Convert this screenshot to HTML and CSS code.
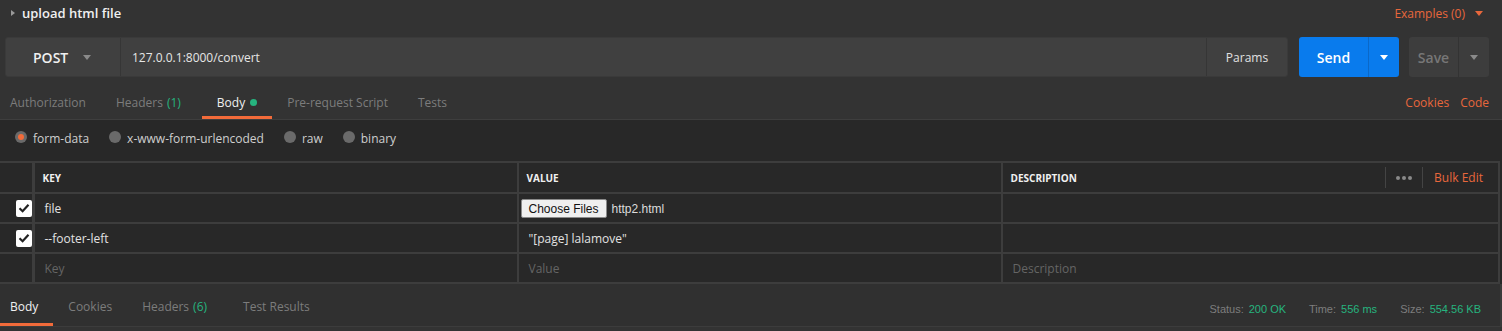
FILE: index.html
```
<!DOCTYPE html>
<html lang="en">
<head>
    <meta charset="UTF-8">
    <meta name="viewport" content="width=device-width, initial-scale=1.0">
    <title>upload html file</title>
    <link rel="stylesheet" href="styles.css">
</head>
<body>
    <div class="title-bar">
        <div class="title">
            <span class="toggle"></span>
            <span>upload html file</span>
        </div>
        <div class="examples">Examples (0) <span class="caret orange"></span></div>
    </div>

    <div class="url-row">
        <div class="url-box">
            <div class="method">POST <span class="caret"></span></div>
            <div class="url">127.0.0.1:8000/convert</div>
            <div class="params">Params</div>
        </div>
        <div class="send">
            <span class="send-label">Send</span>
            <span class="send-drop"><span class="caret white"></span></span>
        </div>
        <div class="save">
            <span class="save-label">Save</span>
            <span class="save-drop"><span class="caret"></span></span>
        </div>
    </div>

    <div class="req-tabs">
        <div class="tabs">
            <div class="tab">Authorization</div>
            <div class="tab">Headers <span class="count">(1)</span></div>
            <div class="tab active">Body <span class="dot"></span></div>
            <div class="tab">Pre-request Script</div>
            <div class="tab">Tests</div>
        </div>
        <div class="links">
            <span>Cookies</span>
            <span>Code</span>
        </div>
    </div>

    <div class="body-panel">
        <div class="body-types">
            <label class="radio"><span class="circle on"></span>form-data</label>
            <label class="radio"><span class="circle"></span>x-www-form-urlencoded</label>
            <label class="radio"><span class="circle"></span>raw</label>
            <label class="radio"><span class="circle"></span>binary</label>
        </div>

        <table class="kv">
            <thead>
                <tr>
                    <th class="check-col"></th>
                    <th class="key-col">KEY</th>
                    <th class="value-col">VALUE</th>
                    <th class="desc-col">
                        <div class="desc-head">
                            <span>DESCRIPTION</span>
                            <div class="desc-tools">
                                <span class="more"><i></i><i></i><i></i></span>
                                <span class="bulk">Bulk Edit</span>
                            </div>
                        </div>
                    </th>
                </tr>
            </thead>
            <tbody>
                <tr>
                    <td class="check-col"><span class="checkbox">
                        <svg width="12" height="10" viewBox="0 0 12 10"><path d="M1.5 5.2 L4.6 8.2 L10.5 1.8" fill="none" stroke="#222" stroke-width="2.2"/></svg>
                    </span></td>
                    <td>file</td>
                    <td class="file-cell"><button class="file-btn">Choose Files</button><span class="file-name">http2.html</span></td>
                    <td></td>
                </tr>
                <tr>
                    <td class="check-col"><span class="checkbox">
                        <svg width="12" height="10" viewBox="0 0 12 10"><path d="M1.5 5.2 L4.6 8.2 L10.5 1.8" fill="none" stroke="#222" stroke-width="2.2"/></svg>
                    </span></td>
                    <td>--footer-left</td>
                    <td>"[page] lalamove"</td>
                    <td></td>
                </tr>
                <tr class="placeholder">
                    <td class="check-col"></td>
                    <td>Key</td>
                    <td>Value</td>
                    <td>Description</td>
                </tr>
            </tbody>
        </table>
    </div>

    <div class="resp-bar">
        <div class="tabs">
            <div class="tab active">Body</div>
            <div class="tab">Cookies</div>
            <div class="tab">Headers <span class="count">(6)</span></div>
            <div class="tab">Test Results</div>
        </div>
        <div class="meta">
            <span class="meta-label">Status:</span><span class="meta-val">200 OK</span>
            <span class="meta-label">Time:</span><span class="meta-val">556 ms</span>
            <span class="meta-label">Size:</span><span class="meta-val">554.56 KB</span>
        </div>
    </div>
</body>
</html>
```

FILE: styles.css
```
body {
    margin: 0;
    background: #333333;
    font-family: "Open Sans", "Noto Sans", sans-serif;
    font-size: 12px;
    color: #d0d0d0;
}

/* 顶部标题 */
.title-bar {
    height: 37px;
    display: flex;
    justify-content: space-between;
    align-items: flex-start;
    padding: 0 19px 0 10px;
}
.title {
    display: flex;
    align-items: center;
    height: 25px;
    font-size: 13px;
    font-weight: 600;
    color: #f0f0f0;
}
.toggle {
    width: 0;
    height: 0;
    border-top: 3.5px solid transparent;
    border-bottom: 3.5px solid transparent;
    border-left: 4px solid #9a9a9a;
    margin: 0 7px 0 1px;
}
.examples {
    height: 26px;
    display: flex;
    align-items: center;
    color: #e8673c;
}
.caret {
    display: inline-block;
    width: 0;
    height: 0;
    border-left: 4px solid transparent;
    border-right: 4px solid transparent;
    border-top: 5px solid #8a8a8a;
}
.caret.orange {
    border-top-color: #e8673c;
    margin-left: 10px;
}
.caret.white {
    border-top-color: #ffffff;
}

/* 地址栏 */
.url-row {
    display: flex;
    height: 40px;
    padding: 0 13px 0 5px;
}
.url-box {
    flex: 1;
    display: flex;
    background: #404040;
    border: 1px solid #3a3a3a;
    border-radius: 3px;
}
.method {
    width: 115px;
    display: flex;
    align-items: center;
    padding-left: 27px;
    box-sizing: border-box;
    font-size: 14px;
    font-weight: 600;
    color: #f0f0f0;
    border-right: 1px solid #363636;
}
.method .caret {
    margin-left: 15px;
}
.url {
    flex: 1;
    display: flex;
    align-items: center;
    padding-left: 11px;
    color: #e6e6e6;
}
.params {
    width: 80px;
    display: flex;
    align-items: center;
    justify-content: center;
    border-left: 1px solid #363636;
    color: #e0e0e0;
}
.send {
    width: 100px;
    margin-left: 11px;
    display: flex;
    background: #097bed;
    border-radius: 3px;
    color: #fff;
    font-size: 14px;
    font-weight: 600;
}
.send-label {
    width: 69px;
    display: flex;
    align-items: center;
    justify-content: center;
}
.send-drop {
    flex: 1;
    display: flex;
    align-items: center;
    justify-content: center;
    border-left: 1px solid #0a68c8;
}
.save {
    width: 80px;
    margin-left: 10px;
    display: flex;
    background: #3d3d3d;
    border-radius: 3px;
    color: #777;
    font-size: 14px;
    font-weight: 600;
}
.save-label {
    width: 49px;
    display: flex;
    align-items: center;
    justify-content: center;
}
.save-drop {
    flex: 1;
    display: flex;
    align-items: center;
    justify-content: center;
    border-left: 1px solid #333;
}

/* 请求标签 */
.req-tabs {
    height: 42px;
    display: flex;
    justify-content: space-between;
    align-items: flex-end;
    border-bottom: 1px solid #3e3e3e;
}
.tabs {
    display: flex;
}
.tab {
    height: 27px;
    line-height: 25px;
    padding: 0 15px;
    color: #7c7c7c;
    border-bottom: 3px solid transparent;
    display: flex;
    align-items: center;
}
.tab:first-child {
    padding-left: 10px;
}
.tab .count {
    color: #26b47f;
    margin: 0 6px 0 4px;
}
.tab.active {
    color: #f0f0f0;
    border-bottom-color: #f26b3a;
}
.dot {
    width: 7px;
    height: 7px;
    border-radius: 50%;
    background: #26b47f;
    margin-left: 5px;
}
.links {
    height: 34px;
    display: flex;
    align-items: center;
    color: #e8673c;
    padding-right: 13px;
}
.links span + span {
    margin-left: 11px;
}

/* 请求体 */
.body-panel {
    background: #282828;
}
.body-types {
    height: 41px;
    box-sizing: border-box;
    padding: 0 0 4px 15px;
    display: flex;
    align-items: center;
}
.radio {
    display: flex;
    align-items: center;
    margin-right: 20px;
    color: #cfcfcf;
}
.circle {
    width: 12px;
    height: 12px;
    border-radius: 50%;
    background: #6a6a6a;
    margin-right: 6px;
    margin-top: -3px;
    display: flex;
    align-items: center;
    justify-content: center;
}
.circle.on::after {
    content: '';
    width: 6px;
    height: 6px;
    border-radius: 50%;
    background: #f26b3a;
}

/* 参数表格 */
.kv {
    width: 1500px;
    border-collapse: collapse;
    table-layout: fixed;
}
.kv th, .kv td {
    border: 2px solid #3d3d3d;
    height: 28px;
    padding: 0 0 0 10px;
    text-align: left;
    color: #e2e2e2;
    white-space: nowrap;
}
.kv td {
    height: 27px;
    padding-top: 1px;
}
.kv th {
    height: 29px;
    padding: 0 0 0 8px;
    font-size: 10px;
    font-weight: 700;
    color: #f0f0f0;
}
.kv .check-col {
    width: 33px;
    border-left: none;
    border-right-width: 3px;
    padding: 0 0 0 16px;
    box-sizing: border-box;
}
.kv th:nth-child(2), .kv td:nth-child(2) {
    width: 474px;
}
.kv th:nth-child(3), .kv td:nth-child(3) {
    width: 474px;
}
.desc-head {
    display: flex;
    justify-content: space-between;
    align-items: center;
}
.desc-tools {
    display: flex;
    align-items: center;
    height: 21px;
}
.more {
    height: 21px;
    border-left: 1px solid #444;
    border-right: 1px solid #444;
    padding: 0 10px;
    display: flex;
    align-items: center;
    gap: 2px;
}
.more i {
    width: 4px;
    height: 4px;
    border-radius: 50%;
    background: #8a8a8a;
}
.bulk {
    margin: 0 15px 0 11px;
    font-size: 12px;
    font-weight: 400;
    color: #e8673c;
}
.checkbox {
    width: 16px;
    height: 17px;
    background: #fff;
    border-radius: 2px;
    display: flex;
    align-items: center;
    justify-content: center;
}
.kv .file-cell {
    padding-left: 2px;
}
.file-btn {
    font-family: "Liberation Sans", Arial, sans-serif;
    font-size: 12px;
    color: #111;
    background: #efefef;
    border: 1px solid #8a8a8a;
    border-radius: 2px;
    height: 19px;
    padding: 0 7px;
    margin: 0;
    vertical-align: middle;
}
.file-name {
    font-family: "Liberation Sans", Arial, sans-serif;
    font-size: 12px;
    margin-left: 5px;
    vertical-align: middle;
    color: #dcdcdc;
}
.placeholder td {
    color: #656565;
}

/* 响应栏 */
.resp-bar {
    height: 42px;
    display: flex;
    justify-content: space-between;
    align-items: center;
    background: #303030;
    border-bottom: 1px solid #3c3c3c;
    border-right: 2px solid #3a3a3a;
    width: 1500px;
}
.resp-bar .tabs {
    align-self: flex-end;
}
.resp-bar .tab {
    height: 34px;
}
.resp-bar .tab:first-child {
    padding-right: 15px;
}
.meta {
    font-family: "Liberation Sans", Arial, sans-serif;
    font-size: 11px;
    padding-right: 19px;
    margin-top: 8px;
}
.meta-label {
    color: #7d7d7d;
    margin-right: 5px;
}
.meta-val {
    color: #26b47f;
    margin-right: 20px;
}
.meta-val:last-child {
    margin-right: 0;
}
```
